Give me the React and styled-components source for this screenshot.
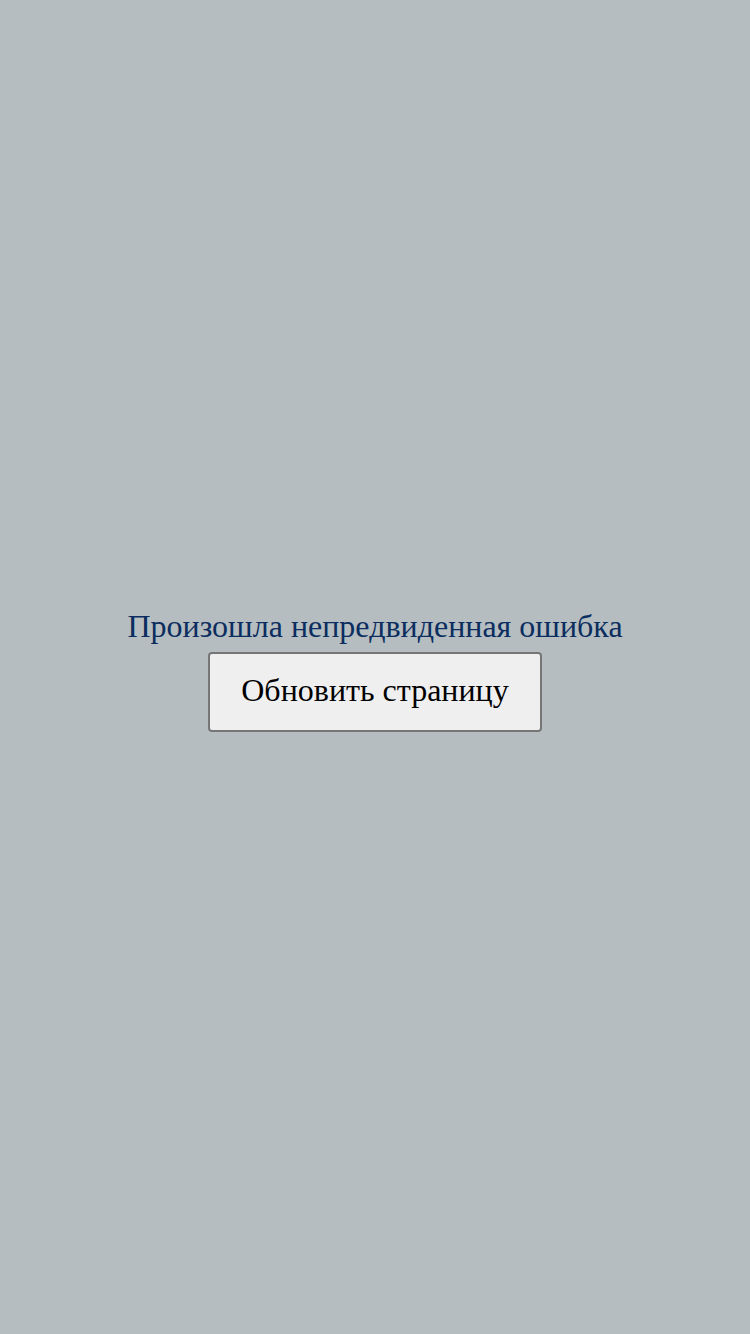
import React from "react";
import styled, { createGlobalStyle } from "styled-components";

const Global = createGlobalStyle`
  html, body { margin: 0; padding: 0; background: #b5bdc0; }
  body { font-family: "Liberation Serif", "Times New Roman", serif; }
`;

const Screen = styled.div`
  box-sizing: border-box;
  min-height: 100vh;
  padding-top: 6px;
  display: flex;
  flex-direction: column;
  align-items: center;
  justify-content: center;
  gap: 7px;
`;

const Message = styled.div`
  font-family: "Liberation Serif", "Times New Roman", serif;
  font-size: 32px;
  line-height: 37px;
  color: #0b2d5f;
`;

const ReloadButton = styled.button`
  font-family: "Liberation Serif", "Times New Roman", serif;
  font-size: 32px;
  line-height: 37px;
  color: #000;
  background: #efefef;
  border: 2px solid #767676;
  border-radius: 4px;
  padding: 18px 31px 21px;
  cursor: pointer;
`;

export default function App() {
  return (
    <>
      <Global />
      <Screen>
        <Message>Произошла непредвиденная ошибка</Message>
        <ReloadButton onClick={() => window.location.reload()}>
          Обновить страницу
        </ReloadButton>
      </Screen>
    </>
  );
}
